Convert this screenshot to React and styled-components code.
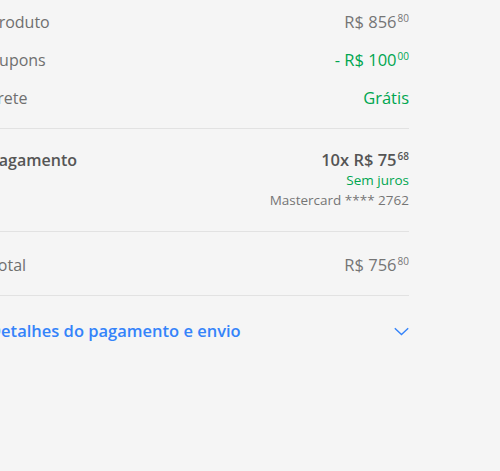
import React from 'react'
import styled, { createGlobalStyle } from 'styled-components'

const Global = createGlobalStyle`
body {
  margin: 0;
  background: #f5f5f5;
  font-family: "Open Sans", "Noto Sans", Arial, sans-serif;
  overflow: hidden;
}`

const Page = styled.div`
width: 500px;
height: 471px;
background: #f5f5f5;
overflow: hidden;`

const Summary = styled.div`
width: 420px;
margin-left: -11px;`

const Section = styled.div`
padding: ${props => props.pad};
border-bottom: ${props => props.last ? 'none' : '1px solid #e2e2e2'};
display: flex;
flex-direction: column;
gap: 18px;`

const Row = styled.div`
display: flex;
justify-content: space-between;
align-items: flex-start;
line-height: 20px;
font-size: 16px;`

const Label = styled.span`
color: ${props => props.strong ? '#555' : '#6f6f6f'};
font-weight: ${props => props.strong ? 600 : 400};`

const Amount = styled.span`
color: ${props => props.color || '#757575'};
font-weight: ${props => props.bold ? 600 : 400};
font-size: 16.5px;
white-space: nowrap;`

const Cents = styled.span`
font-size: 10px;
vertical-align: 6px;
line-height: 0;
margin-left: 1px;`

const Right = styled.div`
display: flex;
flex-direction: column;
align-items: flex-end;`

const Note = styled.span`
color: ${props => props.color};
font-size: ${props => props.size};
line-height: ${props => props.lh};`

const Link = styled.div`
display: flex;
justify-content: space-between;
align-items: center;
color: #3483fa;
font-size: 16.5px;
font-weight: 600;
line-height: 20px;`

const Price = ({ value, cents, color, bold, prefix = '' }) => (
  <Amount color={color} bold={bold}>
    {prefix}R$ {value}<Cents>{cents}</Cents>
  </Amount>
)

export default function App() {
  return (
    <Page>
      <Global />
      <Summary>
        <Section pad="12px 0 20px">
          <Row>
            <Label>Produto</Label>
            <Price value="856" cents="80" />
          </Row>
          <Row>
            <Label>Cupons</Label>
            <Price prefix="- " value="100" cents="00" color="#00a650" />
          </Row>
          <Row>
            <Label>Frete</Label>
            <Amount color="#00a650">Grátis</Amount>
          </Row>
        </Section>
        <Section pad="21px 0 21px">
          <Row>
            <Label strong>Pagamento</Label>
            <Right>
              <Price value="75" prefix="10x " cents="68" color="#555" bold />
              <Note color="#00a650" size="13.5px" lh="21px">Sem juros</Note>
              <Note color="#757575" size="13.5px" lh="19px">Mastercard **** 2762</Note>
            </Right>
          </Row>
        </Section>
        <Section pad="23px 0 20px">
          <Row>
            <Label>Total</Label>
            <Price value="756" cents="80" />
          </Row>
        </Section>
        <Section pad="25px 0" last>
          <Link>
            <span>Detalhes do pagamento e envio</span>
            <svg width="15" height="9" viewBox="0 0 15 9" fill="none">
              <path d="M0.8 1.2l6.7 6.3L14.2 1.2" stroke="#3483fa" strokeWidth="1.4" />
            </svg>
          </Link>
        </Section>
      </Summary>
    </Page>
  )
}
